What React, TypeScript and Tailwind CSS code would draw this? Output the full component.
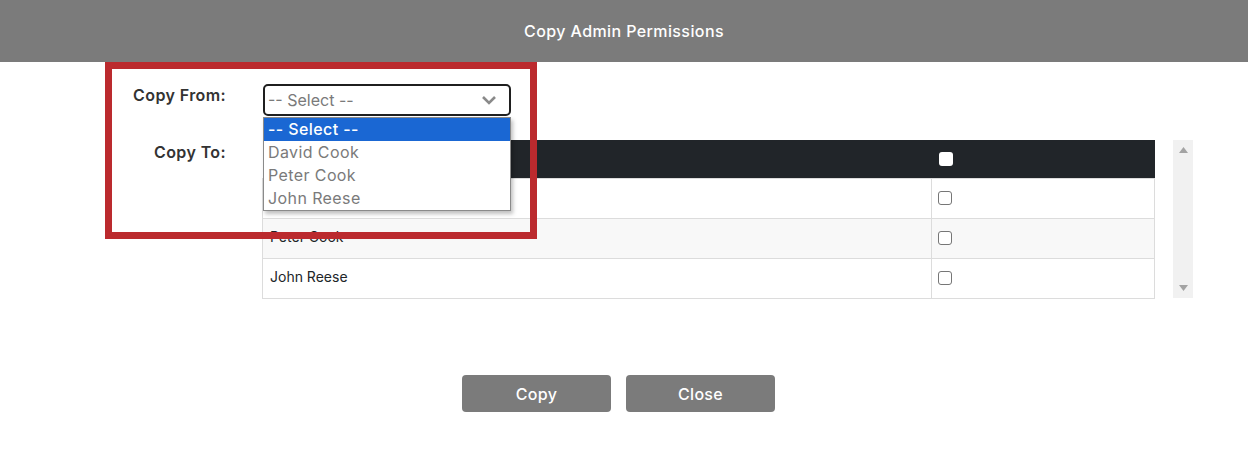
import React from "react";

const users = ["David Cook", "Peter Cook", "John Reese"];
const options = ["-- Select --", "David Cook", "Peter Cook", "John Reese"];

const Checkbox = ({ header }: { header?: boolean }) =>
  header ? (
    <span className="block w-[14px] h-[14px] rounded-[3px] bg-white" />
  ) : (
    <span className="block w-[14px] h-[14px] rounded-[3px] border border-[#767676] bg-white" />
  );

const App = () => {
  return (
    <div className="relative w-full h-[451px] bg-white overflow-hidden font-['Inter','Liberation_Sans',sans-serif]">
      {/* Header */}
      <div className="h-[62px] bg-[#7b7b7b] flex items-center justify-center">
        <span className="text-white text-[16px] font-medium tracking-[0.4px]">Copy Admin Permissions</span>
      </div>

      {/* Copy From */}
      <div className="flex items-start mt-[22px]">
        <div className="w-[226px] text-right pt-[1px] text-[16px] leading-[20px] font-semibold tracking-[0.4px] text-[#333]">Copy From:</div>
        <div className="ml-[37px] w-[248px] h-[32px] border-2 border-[#1f1f1f] rounded-[5px] flex items-center justify-between pl-[3px] pr-[12px]">
          <span className="text-[16px] text-[#7a7a7a]">-- Select --</span>
          <svg width="16" height="10" viewBox="0 0 16 10">
            <polyline points="2,2 8,8 14,2" fill="none" stroke="#8a8a8a" strokeWidth="2.6" />
          </svg>
        </div>
      </div>

      {/* Copy To */}
      <div className="flex items-start mt-[24px]">
        <div className="w-[226px] text-right pt-[2px] text-[16px] leading-[20px] font-semibold tracking-[0.4px] text-[#333]">Copy To:</div>
        <div className="ml-[36px] flex gap-[18px]">
          <table className="w-[893px] border-collapse text-[14px] text-[#212529]">
            <thead>
              <tr className="h-[38px] bg-[#212529]">
                <th className="w-[669px]" />
                <th className="pl-[7px] text-left">
                  <Checkbox header />
                </th>
              </tr>
            </thead>
            <tbody>
              {users.map((u, i) => (
                <tr key={u} className={`h-[40px] ${i === 1 ? "bg-[#f8f8f8]" : "bg-white"}`}>
                  <td className="border border-[#dcdcdc] pl-[7px] pb-[4px]">{u}</td>
                  <td className="border border-[#dcdcdc] pl-[6px]">
                    <Checkbox />
                  </td>
                </tr>
              ))}
            </tbody>
          </table>
          {/* Scrollbar */}
          <div className="w-[20px] h-[158px] bg-[#f1f1f1] flex flex-col items-center justify-between py-[7px]">
            <svg width="9" height="6" viewBox="0 0 9 6"><polygon points="4.5,0 9,6 0,6" fill="#a3a3a3" /></svg>
            <svg width="9" height="6" viewBox="0 0 9 6"><polygon points="0,0 9,0 4.5,6" fill="#a3a3a3" /></svg>
          </div>
        </div>
      </div>

      {/* Buttons */}
      <div className="flex justify-center gap-[15px] mt-[76px] pr-[11px]">
        <button className="w-[149px] h-[37px] pt-[2px] rounded-[4px] bg-[#7b7b7b] text-white text-[16px] font-medium tracking-[0.3px]">Copy</button>
        <button className="w-[149px] h-[37px] pt-[2px] rounded-[4px] bg-[#7b7b7b] text-white text-[16px] font-medium tracking-[0.3px]">Close</button>
      </div>

      {/* Open dropdown */}
      <div className="absolute left-[263px] top-[117px] w-[248px] border border-[#8a8a8a] bg-white shadow-[2px_3px_4px_rgba(0,0,0,0.25)]">
        {options.map((o, i) => (
          <div
            key={o}
            className={`h-[23px] leading-[23px] pl-[4px] text-[16px] tracking-[0.4px] ${i === 0 ? "bg-[#1a67d3] text-white font-medium" : "text-[#7a7a7a]"}`}
          >
            {o}
          </div>
        ))}
      </div>

      {/* Annotation box */}
      <div className="absolute left-[105px] top-[62px] w-[432px] h-[177px] border-[7px] border-[#bb2a2e] pointer-events-none" />
    </div>
  );
};

export default App;
